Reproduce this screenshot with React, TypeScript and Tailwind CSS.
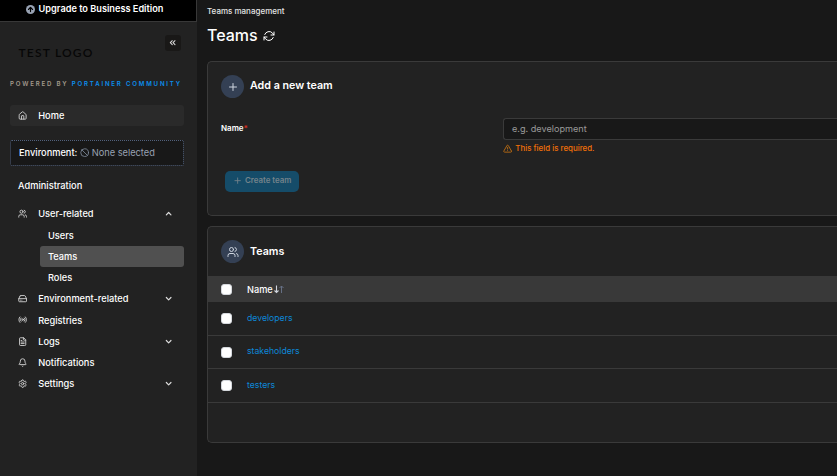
import React from 'react';
import {
  ArrowUp,
  Bell,
  Ban,
  ChevronDown,
  ChevronUp,
  ChevronsLeft,
  FileText,
  HardDrive,
  House,
  Plus,
  Radio,
  Settings,
  TriangleAlert,
  Users,
  type LucideIcon,
} from 'lucide-react';

type NavItemProps = {
  icon: LucideIcon;
  label: string;
  chevron?: 'up' | 'down';
  className?: string;
};

function NavItem({ icon: Icon, label, chevron, className = 'h-[21.3px]' }: NavItemProps) {
  const Chevron = chevron === 'up' ? ChevronUp : ChevronDown;
  return (
    <div className={`flex shrink-0 items-center rounded-[3px] pl-2 pr-[11px] ${className}`}>
      <Icon size={9.3} strokeWidth={2.3} className="shrink-0 text-[#d4d4d4]" />
      <span className="ml-[10.9px] flex-1 pt-[0.8px]">{label}</span>
      {chevron && <Chevron size={9.3} strokeWidth={3} className="text-[#dedede]" />}
    </div>
  );
}

function SubItem({ label, active }: { label: string; active?: boolean }) {
  return (
    <div
      className={`ml-[30px] flex h-[21.3px] shrink-0 items-center rounded-[3px] pl-2 pt-px ${active ? 'bg-[#505050]' : ''}`}
    >
      {label}
    </div>
  );
}

function Sidebar() {
  return (
    <aside className="flex h-full w-[197px] shrink-0 flex-col bg-[#222222] text-[9.25px] font-medium text-white">
      <div className="flex h-[22px] shrink-0 items-center justify-center border-b border-r border-[#383838] bg-black pb-[3px] pr-[7px] text-[9.2px] font-semibold">
        <span className="mr-1 flex size-[9px] items-center justify-center rounded-full bg-[#98a2b3]">
          <ArrowUp size={7} strokeWidth={4} className="text-black" />
        </span>
        Upgrade to Business Edition
      </div>
      <div className="flex min-h-0 flex-1 flex-col pl-[10px] pr-[13px]">
        <div className="flex h-[53px] shrink-0 justify-between pl-[8.5px] pr-[3px] pt-[13px]">
          <span className="mt-[10px] whitespace-nowrap font-['Lato',sans-serif] text-[12px] font-semibold leading-[16px] tracking-[1.2px] text-[#070707]">
            TEST LOGO
          </span>
          <span className="flex size-4 items-center justify-center rounded-[3px] bg-[#191817]">
            <ChevronsLeft size={9.3} strokeWidth={2.8} className="text-[#d8d8d8]" />
          </span>
        </div>
        <div className="mt-[4px] h-[10px] shrink-0 whitespace-nowrap text-[6.1px] font-semibold leading-[10px] tracking-[1.81px] text-[#a39a8c]">
          POWERED BY <span className="text-[#0b8fee]">PORTAINER COMMUNITY</span>
        </div>
        <NavItem icon={House} label="Home" className="mt-[16px] h-[21px] bg-[#2a2a2a]" />
        <div className="mt-[14px] flex h-[26px] shrink-0 items-center whitespace-nowrap rounded-[2px] border border-dotted border-[#52617c] bg-[#181818] pl-2">
          Environment:
          <Ban size={9.3} strokeWidth={2.2} className="ml-[3px] mr-[2px] text-[#7b8798]" />
          <span className="font-normal text-[#98a2b3]">None selected</span>
        </div>
        <div className="mt-[9px] flex h-[21px] shrink-0 items-center pl-2 pt-px">Administration</div>
        <NavItem icon={Users} label="User-related" chevron="up" className="mt-[7px] h-[21.3px]" />
        <SubItem label="Users" />
        <SubItem label="Teams" active />
        <SubItem label="Roles" />
        <NavItem icon={HardDrive} label="Environment-related" chevron="down" />
        <NavItem icon={Radio} label="Registries" />
        <NavItem icon={FileText} label="Logs" chevron="down" />
        <NavItem icon={Bell} label="Notifications" />
        <NavItem icon={Settings} label="Settings" chevron="down" />
      </div>
    </aside>
  );
}

function RefreshIcon() {
  return (
    <svg
      width="12"
      height="12"
      viewBox="0 0 24 24"
      fill="none"
      stroke="currentColor"
      strokeWidth="2"
      strokeLinecap="round"
      strokeLinejoin="round"
      className="mt-px ml-[5px]"
    >
      <path d="M22 4v6h-6M2 20v-6h6" />
      <path d="M3.5 9a9 9 0 0 1 14.9-3.4L22 10M2 14l3.6 4.4A9 9 0 0 0 20.5 15" />
    </svg>
  );
}

function CardTitle({ icon: Icon, label, className = '' }: { icon: LucideIcon; label: string; className?: string }) {
  return (
    <div className="flex h-[23px] items-center text-[10.7px] font-semibold text-white">
      <span className="mr-[6px] flex size-[23px] items-center justify-center rounded-full bg-[#344054]">
        <Icon size={12} strokeWidth={2} className="text-[#cfd6e0]" />
      </span>
      <span className={className}>{label}</span>
    </div>
  );
}

function Checkbox() {
  return <span className="mr-[15px] size-[11px] shrink-0 rounded-[3px] border border-[#d4d7dc] bg-white" />;
}

function TeamRow({ name, className }: { name: string; className: string }) {
  return (
    <div className={`flex items-center border-b border-[#3a3a3a] pl-[13px] ${className}`}>
      <Checkbox />
      <span className="text-[8.7px] text-[#0d87d8]">{name}</span>
    </div>
  );
}

export default function App() {
  return (
    <div className="flex h-[476px] w-[837px] overflow-hidden bg-[#181818] font-['Inter',sans-serif]">
      <Sidebar />
      <main className="flex min-w-0 flex-1 flex-col pl-[10px] text-[9.35px] text-white">
        <div className="mt-[5px] h-3 text-[8px] font-medium leading-3 text-[#e4e4e4]">Teams management</div>
        <div className="mt-[7px] flex h-[22px] items-center text-[16px] font-medium">
          Teams
          <RefreshIcon />
        </div>
        <section className="mt-[15px] h-[155px] shrink-0 rounded-l-[5px] border-y border-l border-[#3a3a3a] bg-[#222222] pl-[13px] pt-[13px]">
          <CardTitle icon={Plus} label="Add a new team" />
          <div className="mt-5 flex">
            <label className="w-[282px] shrink-0 pt-[4px] text-[8px] font-semibold leading-3">
              Name<span className="text-[#d92d20]">*</span>
            </label>
            <div className="min-w-0 flex-1">
              <div className="flex h-[22px] items-center rounded-l-[3px] border-y border-l border-[#3a3a3a] bg-[#181818] pl-2 text-[9.15px] text-[#9a9a9a]">
                e.g. development
              </div>
              <div className="mt-[3px] flex h-3 items-center text-[7.9px] font-medium text-[#f27008]">
                <TriangleAlert size={9.3} strokeWidth={2.2} className="mr-[3px] text-[#c87313]" />
                This field is required.
              </div>
            </div>
          </div>
          <button className="ml-1 mt-[16px] flex h-[21px] w-[74px] items-center justify-center rounded-[5px] bg-[#154c69] pb-px text-[7.9px] font-semibold text-[#74838b]">
            <Plus size={9.3} strokeWidth={2.2} className="mr-[3px]" />
            Create team
          </button>
        </section>
        <section className="mt-[10px] h-[217px] shrink-0 overflow-hidden rounded-l-[5px] border-y border-l border-[#3a3a3a] bg-[#222222]">
          <div className="h-[49px] pl-[13px] pt-[13px]">
            <CardTitle icon={Users} label="Teams" className="pt-px" />
          </div>
          <div className="flex h-[26px] items-center bg-[#393939] pl-[13px] text-[9.2px] font-medium">
            <Checkbox />
            <span className="pt-px">Name</span>
            <svg width="11" height="9" viewBox="0 0 11 9" fill="none" className="ml-[1.5px]">
              <path d="M2.5 0.5v7M0.5 5.5l2 2 2-2" stroke="#d0d5dd" strokeWidth="1.1" />
              <path d="M7.5 8V1M5.5 3l2-2 2 2" stroke="#667085" />
            </svg>
          </div>
          <TeamRow name="developers" className="h-[34px]" />
          <TeamRow name="stakeholders" className="h-[33px]" />
          <TeamRow name="testers" className="h-[34px]" />
        </section>
      </main>
    </div>
  );
}
